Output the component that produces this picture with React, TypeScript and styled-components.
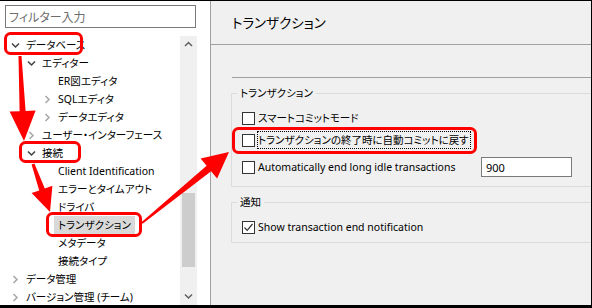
import React from 'react';
import styled, { createGlobalStyle } from 'styled-components';

const GlobalStyle = createGlobalStyle`
  html, body {
    margin: 0;
    padding: 0;
    background: #fff;
  }
  body {
    font-family: "Noto Sans", "Noto Sans CJK JP", sans-serif;
    font-size: 10.5px;
    color: #000;
  }
  * {
    box-sizing: border-box;
  }
`;

const Frame = styled.div`
  position: relative;
  width: 592px;
  height: 308px;
  display: flex;
  border-top: 1px solid #000;
  border-right: 1px solid #000;
  border-bottom: 3px solid #000;
  overflow: hidden;
  font-feature-settings: "palt";
`;

const LeftPanel = styled.div`
  width: 210px;
  flex: none;
  display: flex;
  flex-direction: column;
  background: #fff;
  padding: 4px 13px 0 5px;
`;

const Filter = styled.div`
  width: 191px;
  height: 23px;
  border: 1px solid #7a7a7a;
  padding-left: 3px;
  display: flex;
  align-items: center;
  color: #6d6d6d;
  font-size: 12px;
`;

const TreeArea = styled.div`
  flex: 1;
  display: flex;
  margin-top: 8px;
  min-height: 0;
`;

const TreeList = styled.div`
  flex: 1;
  display: flex;
  flex-direction: column;
`;

const Row = styled.div<{ $level: number }>`
  height: 18px;
  flex: none;
  display: flex;
  align-items: center;
  padding-left: ${(p) => 3 + p.$level * 16}px;
  white-space: nowrap;
`;

const Expander = styled.span`
  width: 14px;
  height: 18px;
  flex: none;
  display: flex;
  align-items: center;
  justify-content: center;
`;

const RowLabel = styled.span<{ $selected?: boolean }>`
  height: 18px;
  line-height: 18px;
  padding: 0 4px;
  background: ${(p) => (p.$selected ? '#d9d9d9' : 'transparent')};
`;

const Scrollbar = styled.div`
  width: 17px;
  flex: none;
  display: flex;
  flex-direction: column;
  background: #f0f0f0;
`;

const ScrollButton = styled.div`
  height: 17px;
  flex: none;
  display: flex;
  align-items: center;
  justify-content: center;
`;

const ScrollTrack = styled.div`
  flex: 1;
  display: flex;
  flex-direction: column;
  align-items: center;
`;

const Thumb = styled.div`
  width: 13px;
  height: 74px;
  margin-top: 140px;
  background: #cdcdcd;
`;

const RightPanel = styled.div`
  flex: 1;
  display: flex;
  flex-direction: column;
  background: #f0f0f0;
  border-left: 1px solid #a0a0a0;
  overflow: hidden;
`;

const Header = styled.div`
  height: 44px;
  flex: none;
  display: flex;
  align-items: center;
  padding: 0 0 2px 21px;
  font-size: 13.5px;
  border-bottom: 1px solid #a0a0a0;
`;

const Content = styled.div`
  padding-left: 20px;
  display: flex;
  flex-direction: column;
  width: 420px;
`;

const Separator = styled.div`
  height: 1px;
  margin: 32px 0 0 1px;
  background: #a0a0a0;
`;

const GroupBox = styled.div<{ $bottom: number }>`
  margin-top: 15px;
  border: 1px solid #dcdcdc;
  border-right: none;
  padding: 0 0 ${(p) => p.$bottom}px 10px;
  display: flex;
  flex-direction: column;
`;

const Legend = styled.div`
  align-self: flex-start;
  height: 17px;
  line-height: 17px;
  margin: -9px 0 0 -5px;
  padding: 0 3px;
  background: #f0f0f0;
`;

const CheckRow = styled.div<{ $gap: number; $height?: number; $width?: number }>`
  height: ${(p) => p.$height ?? 18}px;
  width: ${(p) => (p.$width ? `${p.$width}px` : 'auto')};
  margin-top: ${(p) => p.$gap}px;
  display: flex;
  align-items: center;
  white-space: nowrap;
`;

const Box = styled.span`
  width: 13px;
  height: 13px;
  flex: none;
  border: 1px solid #333;
  background: #fff;
  display: flex;
  align-items: center;
  justify-content: center;
`;

const CheckLabel = styled.span<{ $focused?: boolean }>`
  margin-left: 2px;
  height: 18px;
  line-height: 16px;
  padding: 0 1px 0 0;
  border: 1px ${(p) => (p.$focused ? 'dotted #000' : 'solid transparent')};
`;

const NumberField = styled.div`
  width: 91px;
  height: 20px;
  margin-left: auto;
  border: 1px solid #7a7a7a;
  background: #fff;
  padding-left: 4px;
  display: flex;
  align-items: center;
  font-size: 11px;
`;

const Annotations = styled.svg`
  position: absolute;
  top: -1px;
  left: 0;
  pointer-events: none;
`;

type Node = { label: string; level: number; expander?: 'open' | 'closed'; selected?: boolean };

const tree: Node[] = [
  { label: 'データベース', level: 0, expander: 'open' },
  { label: 'エディター', level: 1, expander: 'open' },
  { label: 'ER図エディタ', level: 2 },
  { label: 'SQLエディタ', level: 2, expander: 'closed' },
  { label: 'データエディタ', level: 2, expander: 'closed' },
  { label: 'ユーザー・インターフェース', level: 1, expander: 'closed' },
  { label: '接続', level: 1, expander: 'open' },
  { label: 'Client Identification', level: 2 },
  { label: 'エラーとタイムアウト', level: 2 },
  { label: 'ドライバ', level: 2 },
  { label: 'トランザクション', level: 2, selected: true },
  { label: 'メタデータ', level: 2 },
  { label: '接続タイプ', level: 2 },
  { label: 'データ管理', level: 0, expander: 'closed' },
  { label: 'バージョン管理 (チーム)', level: 0, expander: 'closed' },
];

function Chevron({ dir, color }: { dir: 'down' | 'right' | 'up'; color: string }) {
  const d =
    dir === 'down' ? 'M1 2.5 L4.5 6 L8 2.5' : dir === 'up' ? 'M1 6 L4.5 2.5 L8 6' : 'M2.5 1 L6 4.5 L2.5 8';
  return (
    <svg width="9" height="9" viewBox="0 0 9 9">
      <path d={d} fill="none" stroke={color} strokeWidth="1.5" />
    </svg>
  );
}

function CheckBox({ checked }: { checked?: boolean }) {
  return (
    <Box>
      {checked && (
        <svg width="11" height="11" viewBox="0 0 11 11">
          <path d="M1.5 5.5 L4.2 8.3 L9.5 2" fill="none" stroke="#333" strokeWidth="1.2" />
        </svg>
      )}
    </Box>
  );
}

// thick tapered arrow from tail to tip
function arrow(tx: number, ty: number, hx: number, hy: number, w0: number, w1: number, L: number, H: number) {
  const dx = hx - tx;
  const dy = hy - ty;
  const len = Math.hypot(dx, dy);
  const ux = dx / len;
  const uy = dy / len;
  const px = -uy;
  const py = ux;
  const bx = hx - ux * L;
  const by = hy - uy * L;
  const pts = [
    [tx + (px * w0) / 2, ty + (py * w0) / 2],
    [bx + (px * w1) / 2, by + (py * w1) / 2],
    [bx + px * H, by + py * H],
    [hx, hy],
    [bx - px * H, by - py * H],
    [bx - (px * w1) / 2, by - (py * w1) / 2],
    [tx - (px * w0) / 2, ty - (py * w0) / 2],
  ];
  return pts.map((p) => p.map((v) => v.toFixed(1)).join(',')).join(' ');
}

const RED = '#ff0000';

export default function App() {
  return (
    <>
      <GlobalStyle />
      <Frame>
        <LeftPanel>
          <Filter>フィルター入力</Filter>
          <TreeArea>
            <TreeList>
              {tree.map((n) => (
                <Row key={n.label} $level={n.level}>
                  <Expander>
                    {n.expander === 'open' && <Chevron dir="down" color="#404040" />}
                    {n.expander === 'closed' && <Chevron dir="right" color="#a6a6a6" />}
                  </Expander>
                  <RowLabel $selected={n.selected}>{n.label}</RowLabel>
                </Row>
              ))}
            </TreeList>
            <Scrollbar>
              <ScrollButton>
                <Chevron dir="up" color="#606060" />
              </ScrollButton>
              <ScrollTrack>
                <Thumb />
              </ScrollTrack>
              <ScrollButton>
                <Chevron dir="down" color="#606060" />
              </ScrollButton>
            </Scrollbar>
          </TreeArea>
        </LeftPanel>

        <RightPanel>
          <Header>トランザクション</Header>
          <Content>
            <Separator />
            <GroupBox $bottom={9}>
              <Legend>トランザクション</Legend>
              <CheckRow $gap={7}>
                <CheckBox />
                <CheckLabel>スマートコミットモード</CheckLabel>
              </CheckRow>
              <CheckRow $gap={4}>
                <CheckBox />
                <CheckLabel $focused>トランザクションの終了時に自動コミットに戻す</CheckLabel>
              </CheckRow>
              <CheckRow $gap={8} $height={20} $width={330}>
                <CheckBox />
                <CheckLabel>Automatically end long idle transactions</CheckLabel>
                <NumberField>900</NumberField>
              </CheckRow>
            </GroupBox>
            <GroupBox $bottom={6}>
              <Legend>通知</Legend>
              <CheckRow $gap={7}>
                <CheckBox checked />
                <CheckLabel>Show transaction end notification</CheckLabel>
              </CheckRow>
            </GroupBox>
          </Content>
        </RightPanel>

        <Annotations width="592" height="308" viewBox="0 0 592 308">
          <g fill="none" stroke={RED} strokeWidth="3">
            <rect x="5.5" y="33.5" width="76" height="20" rx="5" />
            <rect x="20.5" y="142.5" width="59" height="19" rx="5" />
            <rect x="47.5" y="213.5" width="93" height="22" rx="5" />
            <rect x="233.5" y="128.5" width="242" height="24" rx="5" />
          </g>
          <g fill={RED}>
            <polygon points={arrow(20, 56, 24, 141, 3, 6, 30, 13)} />
            <polygon points={arrow(33, 164, 50, 212, 3, 6, 24, 11)} />
            <polygon points={arrow(142, 223, 229, 152, 2, 7, 26, 13)} />
          </g>
        </Annotations>
      </Frame>
    </>
  );
}
